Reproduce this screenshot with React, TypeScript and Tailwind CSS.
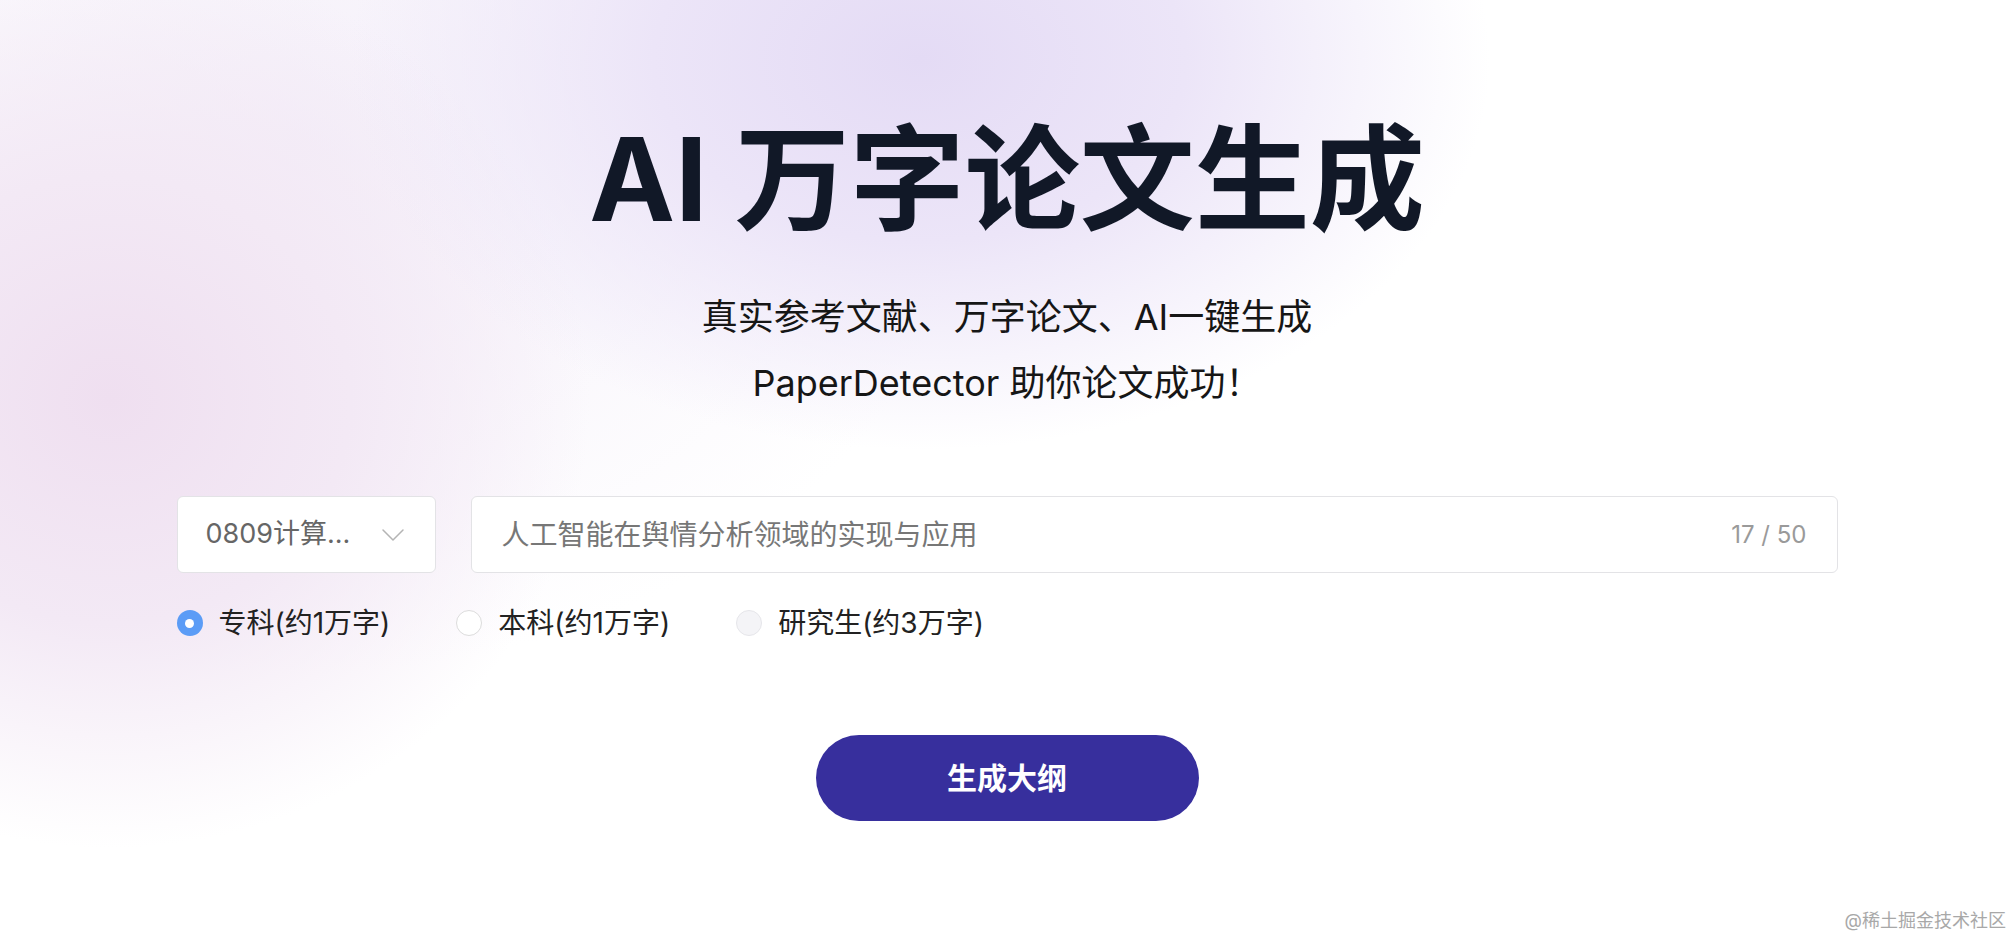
import { ChevronDown } from "lucide-react";

const levels = [
  { label: "专科(约1万字)", state: "checked" },
  { label: "本科(约1万字)", state: "idle" },
  { label: "研究生(约3万字)", state: "muted" },
];

function Radio({ state }: { state: string }) {
  if (state === "checked") {
    return (
      <span className="flex size-[26px] items-center justify-center rounded-full bg-[#5b9cf6]">
        <span className="size-[9px] rounded-full bg-white" />
      </span>
    );
  }
  if (state === "muted") {
    return <span className="size-[26px] rounded-full border border-[#e6e6ea] bg-[#f4f4f7]" />;
  }
  return <span className="size-[26px] rounded-full border border-[#dcdcdc] bg-white" />;
}

export default function App() {
  return (
    <div className="relative flex min-h-screen w-full flex-col items-center overflow-hidden bg-white bg-[radial-gradient(ellipse_760px_520px_at_920px_60px,#e4dbf5_0%,#ece5f8_35%,rgba(255,255,255,0)_75%),radial-gradient(ellipse_600px_560px_at_110px_400px,#efdff0_0%,#f3e9f5_40%,rgba(255,255,255,0)_80%),radial-gradient(ellipse_900px_700px_at_300px_150px,#f4eff9_0%,rgba(255,255,255,0)_75%)] font-['Inter','Noto_Sans_CJK_SC',sans-serif]">
      {/* Heading */}
      <h1 className="mt-[122px] text-[115px] font-bold leading-none text-[#111827]">
        AI 万字论文生成
      </h1>
      <div className="mt-[47px] flex flex-col items-center text-[36px] leading-[66px] text-[#161616]">
        <p>真实参考文献、万字论文、AI一键生成</p>
        <p>PaperDetector 助你论文成功！</p>
      </div>

      {/* Form */}
      <div className="mt-[80px] w-[1661px]">
        <div className="flex h-[77px] gap-[35px]">
          <div className="flex w-[259px] items-center justify-between rounded-md border border-[#e3e3e6] bg-white pl-[28px] pr-[22px]">
            <span className="text-[27px] text-[#666]">0809计算...</span>
            <ChevronDown className="size-[40px] text-[#b4b4b4]" strokeWidth={0.9} />
          </div>
          <div className="flex flex-1 items-center justify-between rounded-md border border-[#e3e3e6] bg-white pl-[30px] pr-[30px]">
            <span className="text-[28px] text-[#777]">人工智能在舆情分析领域的实现与应用</span>
            <span className="text-[24px] text-[#9a9a9a]">17 / 50</span>
          </div>
        </div>

        <div className="mt-[32px] flex h-[36px] items-center gap-[66px]">
          {levels.map((lv) => (
            <label key={lv.label} className="flex items-center gap-[16px]">
              <Radio state={lv.state} />
              <span className="text-[28px] text-[#222]">{lv.label}</span>
            </label>
          ))}
        </div>
      </div>

      <button className="mt-[94px] flex h-[86px] w-[383px] items-center justify-center rounded-full bg-[#372f9d] text-[30px] font-semibold text-white">
        生成大纲
      </button>

      <span className="absolute bottom-[6px] right-[8px] text-[18px] text-[#a8a8a8]">@稀土掘金技术社区</span>
    </div>
  );
}
